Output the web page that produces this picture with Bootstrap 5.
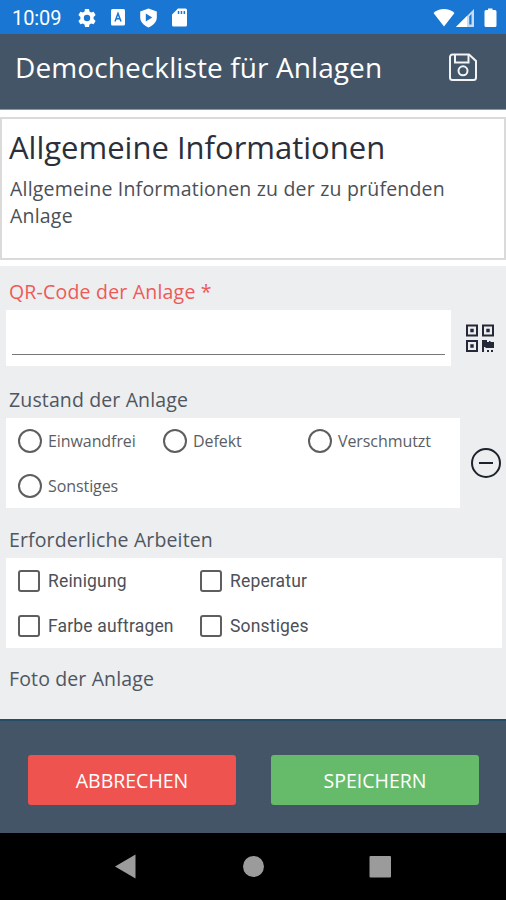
<!DOCTYPE html>
<html lang="de">
<head>
<meta charset="utf-8">
<meta name="viewport" content="width=device-width, initial-scale=1">
<title>Democheckliste für Anlagen</title>
<link href="https://cdn.jsdelivr.net/npm/bootstrap@5.3.0/dist/css/bootstrap.min.css" rel="stylesheet">
<style>
body{font-family:"Open Sans","Noto Sans",sans-serif;background:#fff;color:#3b4450;overflow:hidden}
svg{display:block;flex:none}
.screen{width:506px;height:900px}
.statusbar{height:34px;background:#1976d2;padding:1px 9px 0 12px}
.clock{font:400 20px/34px Roboto,sans-serif;width:65px;letter-spacing:-.1px}
.appbar{height:76px;background:#445567;padding:0 28px 9px 15px;border-bottom:1px solid #8995a3}
.appbar h1{font-size:28px;line-height:40px;font-weight:400;letter-spacing:.1px}
.intro{margin:7px 0 6px;height:143px;border:2px solid #dadada;padding:7px 8px 0 7px}
.intro h2{font-size:31px;line-height:42px;font-weight:400;color:#2b2f3b;letter-spacing:0}
.intro p{font-size:19.5px;line-height:27px;font-weight:400;color:#4b4f56;letter-spacing:.2px;padding:7px 0 0 1px}
.sheet{height:453px;background:#eceef0;padding:0 4px 0 6px}
.caption{font-size:19.5px;line-height:28px;padding-left:3px;font-weight:400;color:#4f5660;letter-spacing:.13px}
.caption.required{color:#ee5a57;letter-spacing:.2px}
.state,.work{padding-top:20px;height:52px}
.work{padding-top:18px;height:50px}
.photo{padding-top:17px}
.panel{background:#fff}
.entry{width:445px;height:56px;padding:0 6px 11px}
.entry input{height:34px;border:0;border-bottom:1.5px solid #777;background:transparent;outline:0}
.radios{width:454px;height:90px;grid-template-columns:145px 145px 1fr}
.checks{height:90px;width:496px;grid-template-columns:182px 1fr}
.radios,.checks{display:grid;grid-template-rows:45px 45px;padding-left:12px}
.option{display:flex;align-items:center;gap:6px;font-size:16px;color:#5a5e64;font-weight:400;letter-spacing:-.08px}
.option input{appearance:none;flex:none;margin:0;border:2px solid #5e5e5e;background:#fff}
.option input[type=radio]{width:24px;height:24px;border-radius:50%}
.option input[type=checkbox]{width:22px;height:22px;border-radius:3px;margin:0 1px 0 0}
.checks .option{font-family:Roboto,sans-serif;font-size:17.5px;font-weight:400;letter-spacing:.17px;color:#4c5058;gap:7px}
.checks .option span{padding-top:2px}
.actions{height:114px;background:#445567;padding:34px 27px 0 28px;gap:35px;border-top:2px solid #244b68}
.actions .btn{height:50px;border:0;border-radius:3px;color:#fff;font-size:19.5px;line-height:52px;padding:0;letter-spacing:0}
.cancel,.cancel:hover{background:#ef5350}
.save,.save:hover{background:#66bb6a}
.navkeys{height:67px;background:#000}
</style>
</head>
<body>
<div class="screen d-flex flex-column">
  <div class="statusbar d-flex align-items-center text-white">
    <span class="clock">10:09</span>
    <svg width="20" height="20" viewBox="0 0 20 20"><path fill="#fff" fill-rule="evenodd" d="M8 1h4l.5 2.600 1.600 1L16.600 3.700l2 3.400-2 1.800v2.200l2 1.800-2 3.400-2.500-.9-1.600 1L12 19H8l-.5-2.600-1.600-1-2.500.9-2-3.400 2-1.800V8.900l-2-1.800 2-3.400 2.500.9 1.600-1zM10 6.800a3.200 3.200 0 1 0 0 6.400 3.200 3.200 0 0 0 0-6.400z"/></svg>
    <svg style="margin-left:14px" width="15" height="17" viewBox="0 0 15 17"><rect width="14" height="16.500" rx="1.500" fill="#fff"/><path d="M4 12.500 7 4.500l3 8M5.200 9.800h3.600" fill="none" stroke="#1976d2" stroke-width="1.500"/></svg>
    <svg style="margin-left:13px" width="19" height="20" viewBox="0 0 19 20"><path fill="#fff" fill-rule="evenodd" d="M9.500.4 17.800 3.500v6c0 4.800-4 8.200-8.300 10C5.200 17.700 1.200 14.300 1.200 9.500v-6zM6.800 5.400v8.200l6.400-4.100z"/></svg>
    <svg style="margin-left:14px" width="16" height="19" viewBox="0 0 16 19"><path fill="#fff" fill-rule="evenodd" d="M6 .5h7.500A1.500 1.500 0 0 1 15 2v15a1.500 1.500 0 0 1-1.500 1.500h-12A1.500 1.500 0 0 1 0 17V6.500zM5.800 3v3h1.500V3zm2.900 0v3h1.500V3zm2.900 0v3h1.500V3z"/></svg>
    <div class="d-flex align-items-center ms-auto">
      <svg width="22" height="20" viewBox="0 0 22 20"><path fill="#fff" d="M.5 5C6-.4 16-.4 21.500 5L11 18.500z"/></svg>
      <svg style="margin-left:1px" width="19" height="20" viewBox="0 0 19 20"><path fill="#fff" fill-opacity=".75" d="M18 1v18H0z"/><path fill="#fff" d="M11 8v11H0z"/><path fill="#1976d2" d="M13.300 8.300 15.500 6v10.500h-2.200z"/></svg>
      <svg style="margin-left:9px" width="13" height="20" viewBox="0 0 13 20"><path fill="#fff" d="M4 .5h4.500V2H11a1.500 1.500 0 0 1 1.500 1.500v14A1.500 1.500 0 0 1 11 19H2a1.500 1.500 0 0 1-1.500-1.500v-14A1.500 1.500 0 0 1 2 2h2z"/></svg>
    </div>
  </div>

  <header class="appbar d-flex align-items-center justify-content-between text-white">
    <h1 class="m-0">Democheckliste für Anlagen</h1>
    <svg width="30" height="30" viewBox="0 0 30 30" fill="none" stroke="#f2f4f6" stroke-width="2"><path d="M4.500 2.500H21L28 9v16.500a2.500 2.500 0 0 1-2.500 2.500h-21A2.500 2.500 0 0 1 2 25.500V5A2.500 2.500 0 0 1 4.500 2.500z"/><path d="M7 3v7.500h13.500V3"/><circle cx="15" cy="18.800" r="4.500"/></svg>
  </header>

  <section class="intro">
    <h2 class="m-0">Allgemeine Informationen</h2>
    <p class="m-0">Allgemeine Informationen zu der zu prüfenden Anlage</p>
  </section>

  <main class="sheet">
    <div class="caption required pt-2 mt-1 mb-1">QR-Code der Anlage *</div>
    <div class="d-flex align-items-center">
      <div class="panel entry d-flex align-items-end"><input class="w-100" type="text" aria-label="QR-Code der Anlage"></div>
      <svg style="margin-left:14px" width="29" height="28" viewBox="0 0 29 28"><g fill="none" stroke="#252839" stroke-width="2"><path d="M2 1.500h10v10H2zM18 1.500h10v10H18zM2 17h10v10H2z"/></g><path fill="#252839" d="M5.300 4.800h3.400v3.400H5.300zM21.300 4.800h3.400v3.400h-3.400zM5.300 20.300h3.400v3.400H5.300zM17 16h5v2h2v-1h1.500v1H29v6h-8.500v-1H19v5h-2zM22 26h2v2h-2zM26 26h2v2h-2z"/></svg>
    </div>
    <div class="caption state">Zustand der Anlage</div>
    <div class="d-flex align-items-center">
      <div class="panel radios">
        <label class="option"><input type="radio" name="state">Einwandfrei</label>
        <label class="option"><input type="radio" name="state">Defekt</label>
        <label class="option"><input type="radio" name="state">Verschmutzt</label>
        <label class="option"><input type="radio" name="state">Sonstiges</label>
      </div>
      <svg style="margin-left:10px" width="32" height="32" viewBox="0 0 32 32" fill="none" stroke="#1d222b" stroke-width="2"><circle cx="16" cy="16" r="14"/><path d="M9 16h14"/></svg>
    </div>
    <div class="caption work">Erforderliche Arbeiten</div>
    <div class="panel checks">
      <label class="option"><input type="checkbox"><span>Reinigung</span></label>
      <label class="option"><input type="checkbox"><span>Reperatur</span></label>
      <label class="option"><input type="checkbox"><span>Farbe auftragen</span></label>
      <label class="option"><input type="checkbox"><span>Sonstiges</span></label>
    </div>
    <div class="caption photo">Foto der Anlage</div>
  </main>

  <footer class="actions d-flex">
    <button class="btn cancel flex-fill w-50" type="button">ABBRECHEN</button>
    <button class="btn save flex-fill w-50" type="button">SPEICHERN</button>
  </footer>

  <nav class="navkeys d-flex justify-content-center align-items-center">
    <svg width="506" height="67" viewBox="0 0 506 67" fill="#9b9b9b"><path d="M115 33.500 135.500 21.500v24z"/><circle cx="253.500" cy="33.500" r="10.500"/><rect x="369.500" y="23" width="21.500" height="21.500" rx="1"/></svg>
  </nav>
</div>
<script src="https://cdn.jsdelivr.net/npm/bootstrap@5.3.0/dist/js/bootstrap.bundle.min.js"></script>
</body>
</html>
